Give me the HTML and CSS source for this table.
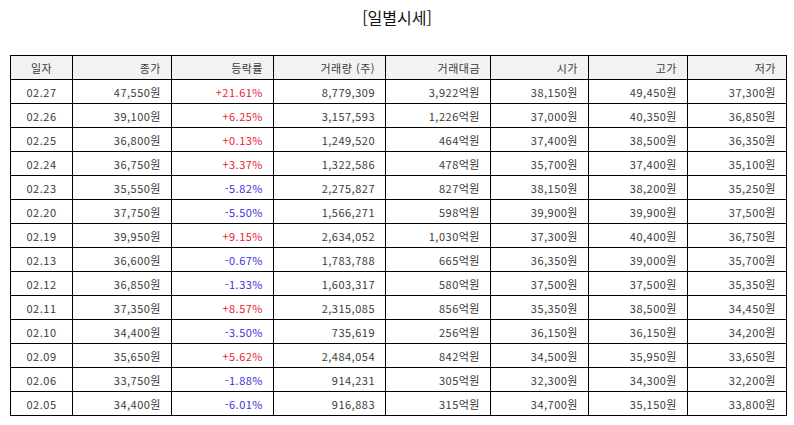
FILE: index.html
```html
<!DOCTYPE html>
<html lang="ko">
<head>
<meta charset="utf-8">
<link rel="stylesheet" href="styles.css">
</head>
<body>
<h1 class="title">[일별시세]</h1>
<table class="quotes">
<colgroup>
<col class="c-date"><col class="c-close"><col class="c-rate"><col class="c-vol"><col class="c-amt"><col class="c-open"><col class="c-high"><col class="c-low">
</colgroup>
<thead>
<tr><th class="center">일자</th><th>종가</th><th>등락률</th><th>거래량 (주)</th><th>거래대금</th><th>시가</th><th>고가</th><th>저가</th></tr>
</thead>
<tbody>
<tr><td class="center">02.27</td><td>47,550원</td><td class="up">+21.61%</td><td>8,779,309</td><td>3,922억원</td><td>38,150원</td><td>49,450원</td><td>37,300원</td></tr>
<tr><td class="center">02.26</td><td>39,100원</td><td class="up">+6.25%</td><td>3,157,593</td><td>1,226억원</td><td>37,000원</td><td>40,350원</td><td>36,850원</td></tr>
<tr><td class="center">02.25</td><td>36,800원</td><td class="up">+0.13%</td><td>1,249,520</td><td>464억원</td><td>37,400원</td><td>38,500원</td><td>36,350원</td></tr>
<tr><td class="center">02.24</td><td>36,750원</td><td class="up">+3.37%</td><td>1,322,586</td><td>478억원</td><td>35,700원</td><td>37,400원</td><td>35,100원</td></tr>
<tr><td class="center">02.23</td><td>35,550원</td><td class="down">-5.82%</td><td>2,275,827</td><td>827억원</td><td>38,150원</td><td>38,200원</td><td>35,250원</td></tr>
<tr><td class="center">02.20</td><td>37,750원</td><td class="down">-5.50%</td><td>1,566,271</td><td>598억원</td><td>39,900원</td><td>39,900원</td><td>37,500원</td></tr>
<tr><td class="center">02.19</td><td>39,950원</td><td class="up">+9.15%</td><td>2,634,052</td><td>1,030억원</td><td>37,300원</td><td>40,400원</td><td>36,750원</td></tr>
<tr><td class="center">02.13</td><td>36,600원</td><td class="down">-0.67%</td><td>1,783,788</td><td>665억원</td><td>36,350원</td><td>39,000원</td><td>35,700원</td></tr>
<tr><td class="center">02.12</td><td>36,850원</td><td class="down">-1.33%</td><td>1,603,317</td><td>580억원</td><td>37,500원</td><td>37,500원</td><td>35,350원</td></tr>
<tr><td class="center">02.11</td><td>37,350원</td><td class="up">+8.57%</td><td>2,315,085</td><td>856억원</td><td>35,350원</td><td>38,500원</td><td>34,450원</td></tr>
<tr><td class="center">02.10</td><td>34,400원</td><td class="down">-3.50%</td><td>735,619</td><td>256억원</td><td>36,150원</td><td>36,150원</td><td>34,200원</td></tr>
<tr><td class="center">02.09</td><td>35,650원</td><td class="up">+5.62%</td><td>2,484,054</td><td>842억원</td><td>34,500원</td><td>35,950원</td><td>33,650원</td></tr>
<tr><td class="center">02.06</td><td>33,750원</td><td class="down">-1.88%</td><td>914,231</td><td>305억원</td><td>32,300원</td><td>34,300원</td><td>32,200원</td></tr>
<tr><td class="center">02.05</td><td>34,400원</td><td class="down">-6.01%</td><td>916,883</td><td>315억원</td><td>34,700원</td><td>35,150원</td><td>33,800원</td></tr>
</tbody>
</table>
</body>
</html>
```
FILE: styles.css
```css
html, body {
  margin: 0;
  padding: 0;
  background: #ffffff;
}
body {
  font-family: "Noto Sans CJK KR", "Noto Sans", sans-serif;
  color: #222;
}
.title {
  margin: 0;
  padding-top: 6px;
  height: 50px;
  box-sizing: border-box;
  font-size: 16px;
  font-weight: 400;
  line-height: 22px;
  text-align: center;
  color: #111;
}
.quotes {
  margin-left: 10px;
  width: 776px;
  table-layout: fixed;
  border-collapse: collapse;
  font-size: 11px;
  letter-spacing: 0.5px;
  margin-top: 5px;
}
.c-date { width: 62px; }
.c-close { width: 99px; }
.c-rate { width: 102px; }
.c-vol { width: 112px; }
.c-amt { width: 105px; }
.c-open { width: 98px; }
.c-high { width: 99px; }
.c-low { width: 99px; }
.quotes th, .quotes td {
  border: 1px solid #000;
  height: 24px;
  padding: 0 10px 0 4px;
  text-align: right;
  font-weight: 400;
  line-height: 14px;
  box-sizing: border-box;
  color: #3a3a3a;
}
.quotes th {
  background: #f2f2f2;
}
.quotes .center {
  text-align: center;
  padding: 0;
}
.quotes .up { color: #e8232d; }
.quotes .down { color: #3a35d8; }
```
